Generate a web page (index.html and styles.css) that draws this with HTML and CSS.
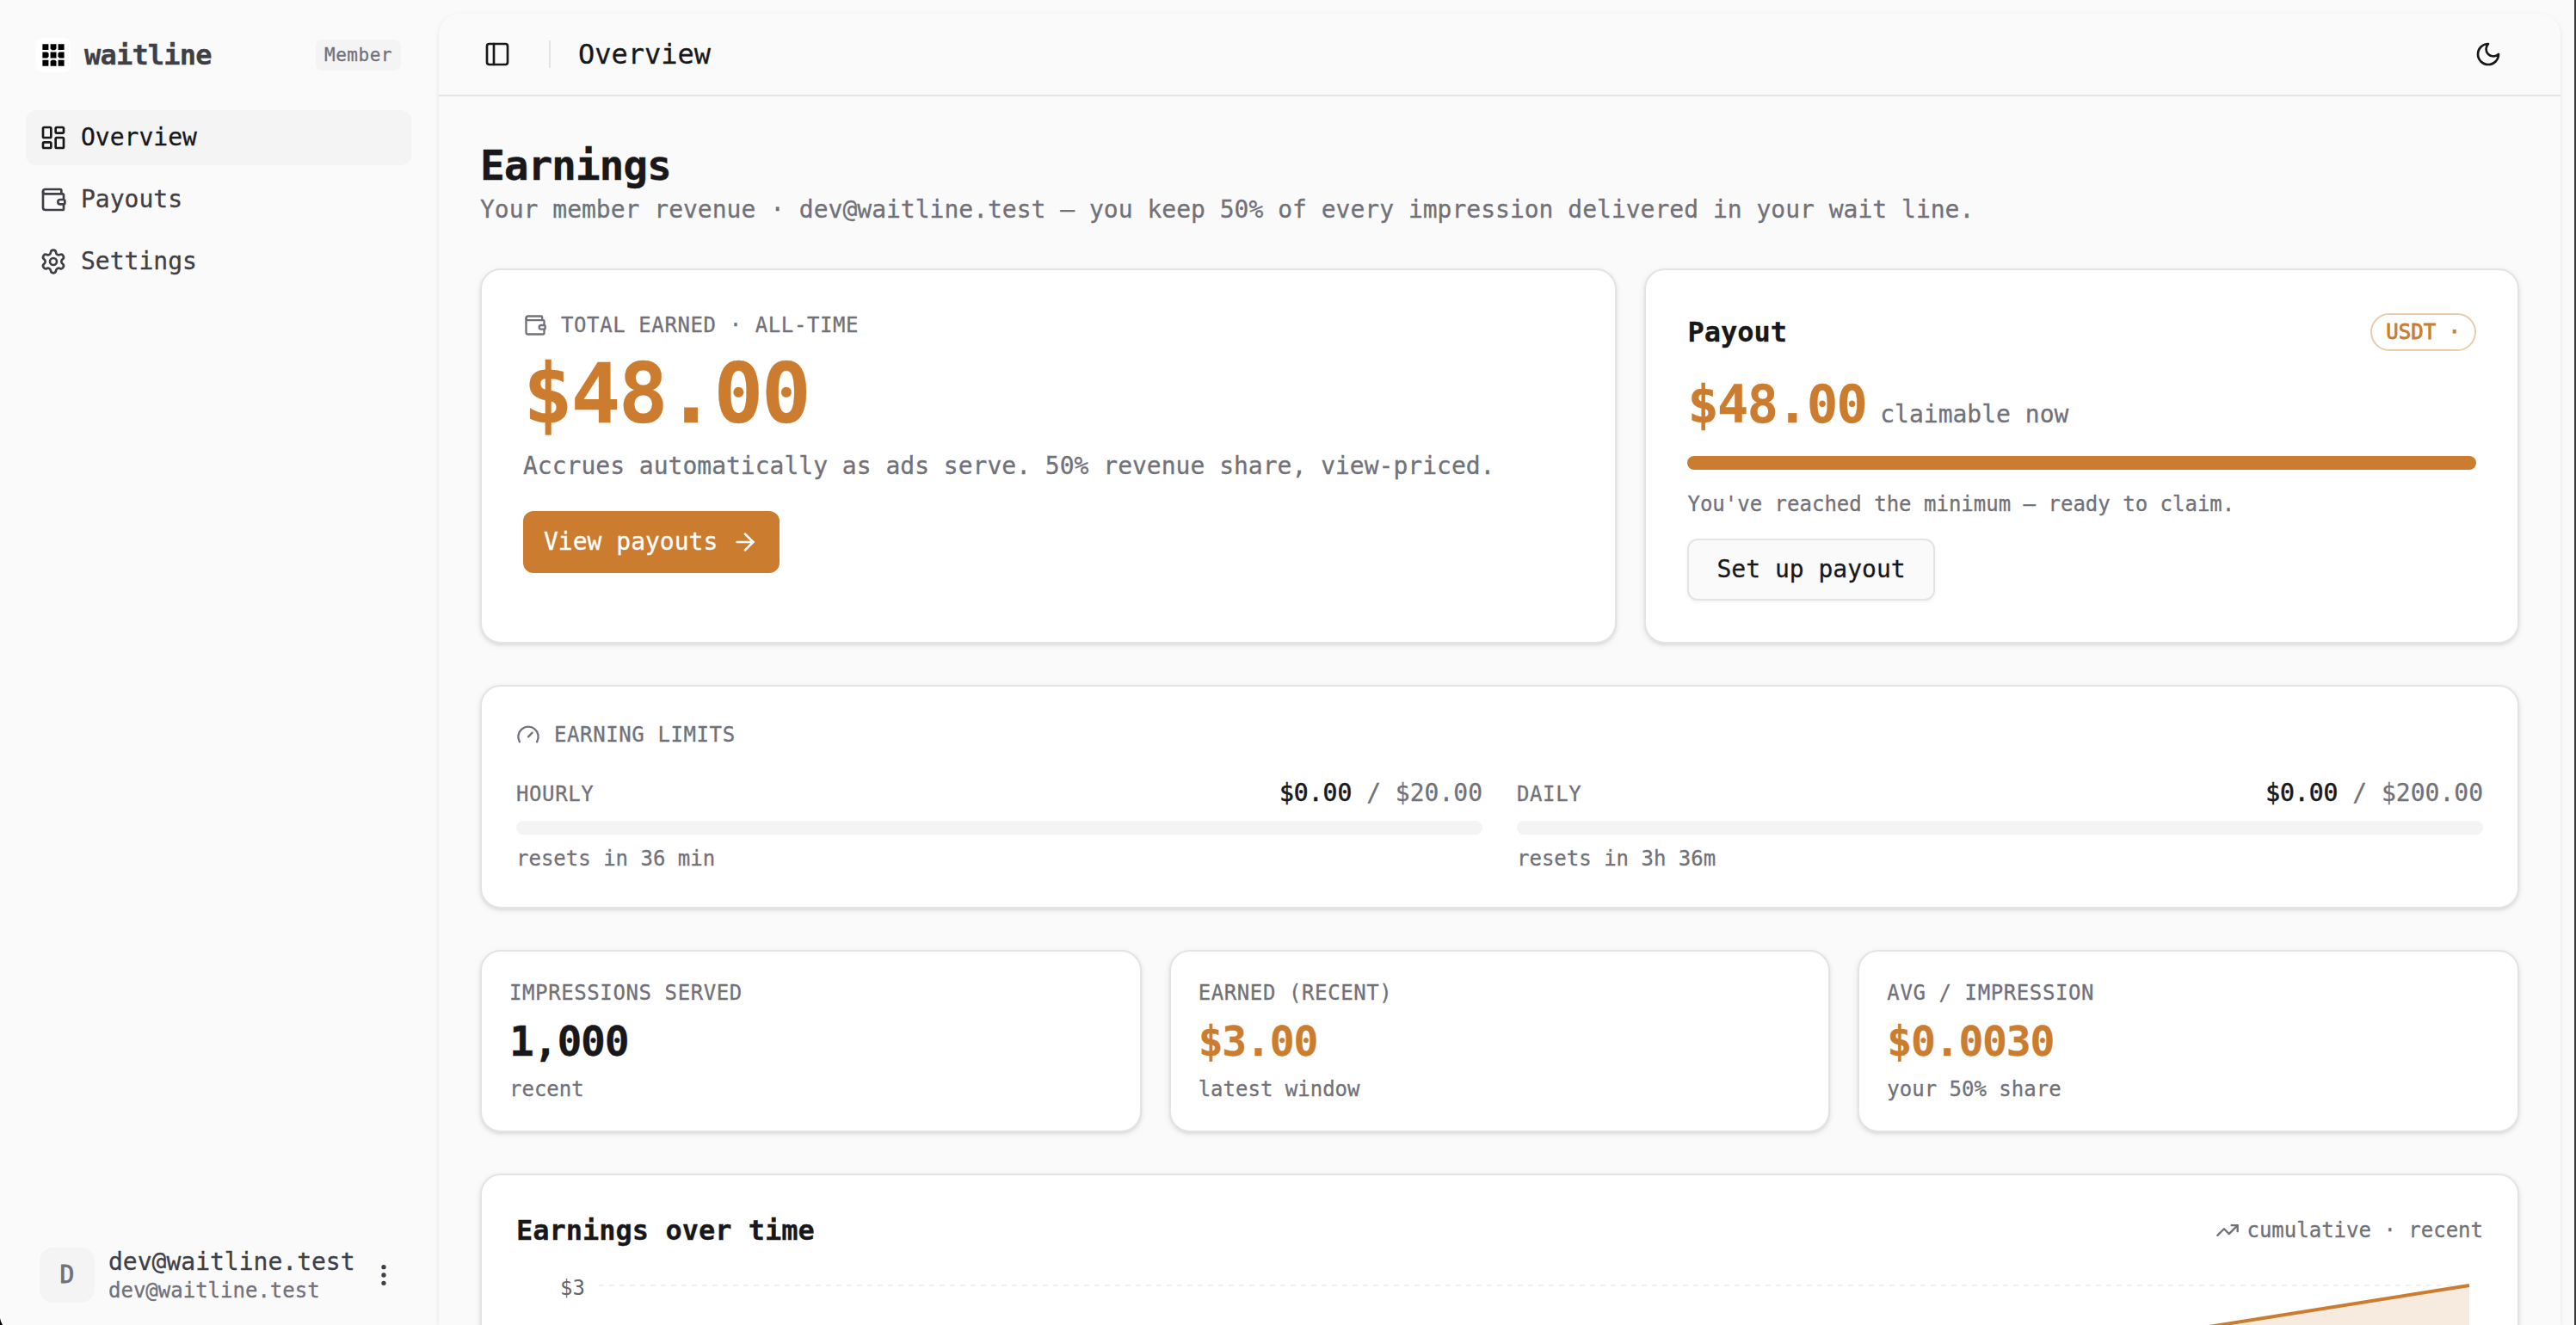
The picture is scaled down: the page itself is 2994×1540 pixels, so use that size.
FILE: index.html
```html
<!DOCTYPE html>
<html lang="en">
<head>
    <meta charset="UTF-8">
    <meta name="viewport" content="width=device-width, initial-scale=1.0">
    <title>Overview - waitline</title>
    <link rel="stylesheet" href="styles.css">
</head>
<body>
    <div class="app">
        <aside class="sidebar">
            <div class="brand">
                <svg class="logo" viewBox="0 0 40 40">
                    <path d="M7.4 7.2h7V14h-7zM25.6 7.2h7V14h-7zM16.6 16.5h6.9v6.9h-6.9zM7.4 25.8h7v6.9h-7zM25.6 25.8h7v6.9h-7z"/>
                    <path d="M16.6 7.2h6.9v5.4l-1.6 1.6h-3.7l-1.6-1.6zM7.4 16.5h5.6l1.6 1.6v3.7l-1.6 1.6H7.4zM32.6 16.5H27l-1.6 1.6v3.7l1.6 1.6h5.6zM16.6 32.7v-5.4l1.6-1.6h3.7l1.6 1.6v5.4z"/>
                </svg>
                <span class="brand-name">waitline</span>
                <span class="role">Member</span>
            </div>
            <nav class="nav">
                <a class="nav-item active">
                    <svg class="icon" viewBox="0 0 24 24"><rect width="7" height="9" x="3" y="3" rx="1"/><rect width="7" height="5" x="14" y="3" rx="1"/><rect width="7" height="9" x="14" y="12" rx="1"/><rect width="7" height="5" x="3" y="16" rx="1"/></svg>
                    <span>Overview</span>
                </a>
                <a class="nav-item">
                    <svg class="icon" viewBox="0 0 24 24"><path d="M19 7V4a1 1 0 0 0-1-1H5a2 2 0 0 0 0 4h15a1 1 0 0 1 1 1v4h-3a2 2 0 0 0 0 4h3a1 1 0 0 0 1-1v-2a1 1 0 0 0-1-1"/><path d="M3 5v14a2 2 0 0 0 2 2h15a1 1 0 0 0 1-1v-4"/></svg>
                    <span>Payouts</span>
                </a>
                <a class="nav-item">
                    <svg class="icon" viewBox="0 0 24 24"><path d="M9.671 4.136a2.34 2.34 0 0 1 4.659 0 2.34 2.34 0 0 0 3.319 1.915 2.34 2.34 0 0 1 2.33 4.033 2.34 2.34 0 0 0 0 3.831 2.34 2.34 0 0 1-2.33 4.033 2.34 2.34 0 0 0-3.319 1.915 2.34 2.34 0 0 1-4.659 0 2.34 2.34 0 0 0-3.32-1.915 2.34 2.34 0 0 1-2.33-4.033 2.34 2.34 0 0 0 0-3.831A2.34 2.34 0 0 1 6.35 6.051a2.34 2.34 0 0 0 3.319-1.915"/><circle cx="12" cy="12" r="3"/></svg>
                    <span>Settings</span>
                </a>
            </nav>
            <div class="user">
                <div class="avatar">D</div>
                <div class="user-text">
                    <span class="user-name">dev@waitline.test</span>
                    <span class="user-email">dev@waitline.test</span>
                </div>
                <svg class="icon" viewBox="0 0 24 24"><circle cx="12" cy="12" r="1"/><circle cx="12" cy="5" r="1"/><circle cx="12" cy="19" r="1"/></svg>
            </div>
        </aside>

        <main class="main">
            <header class="topbar">
                <svg class="icon" viewBox="0 0 24 24"><rect width="18" height="18" x="3" y="3" rx="2"/><path d="M9 3v18"/></svg>
                <div class="separator"></div>
                <span class="page-name">Overview</span>
                <svg class="icon theme-toggle" viewBox="0 0 24 24"><path d="M12 3a6 6 0 0 0 9 9 9 9 0 1 1-9-9Z"/></svg>
            </header>

            <div class="content">
                <div class="heading">
                    <h1>Earnings</h1>
                    <p>Your member revenue · dev@waitline.test — you keep 50% of every impression delivered in your wait line.</p>
                </div>

                <div class="hero">
                    <section class="card card-total">
                        <div class="label">
                            <svg class="icon icon-sm" viewBox="0 0 24 24"><path d="M19 7V4a1 1 0 0 0-1-1H5a2 2 0 0 0 0 4h15a1 1 0 0 1 1 1v4h-3a2 2 0 0 0 0 4h3a1 1 0 0 0 1-1v-2a1 1 0 0 0-1-1"/><path d="M3 5v14a2 2 0 0 0 2 2h15a1 1 0 0 0 1-1v-4"/></svg>
                            TOTAL EARNED · ALL-TIME
                        </div>
                        <div class="total">$48.00</div>
                        <p class="muted">Accrues automatically as ads serve. 50% revenue share, view-priced.</p>
                        <button class="btn btn-primary">
                            View payouts
                            <svg class="icon" viewBox="0 0 24 24"><path d="M5 12h14"/><path d="m12 5 7 7-7 7"/></svg>
                        </button>
                    </section>

                    <section class="card card-payout">
                        <div class="card-head">
                            <h2>Payout</h2>
                            <span class="badge">USDT ·</span>
                        </div>
                        <div class="claimable">
                            <span class="amount">$48.00</span>
                            <span class="muted">claimable now</span>
                        </div>
                        <div class="progress"><div class="progress-fill" style="width: 100%"></div></div>
                        <p class="note">You've reached the minimum — ready to claim.</p>
                        <button class="btn btn-outline">Set up payout</button>
                    </section>
                </div>

                <section class="card card-limits">
                    <div class="label">
                        <svg class="icon icon-sm" viewBox="0 0 24 24"><path d="m12 14 4-4"/><path d="M3.34 19a10 10 0 1 1 17.32 0"/></svg>
                        EARNING LIMITS
                    </div>
                    <div class="limits">
                        <div class="limit">
                            <div class="limit-row">
                                <span class="label">HOURLY</span>
                                <span class="muted"><span class="strong">$0.00</span> / $20.00</span>
                            </div>
                            <div class="progress"><div class="progress-fill" style="width: 0%"></div></div>
                            <p class="note">resets in 36 min</p>
                        </div>
                        <div class="limit">
                            <div class="limit-row">
                                <span class="label">DAILY</span>
                                <span class="muted"><span class="strong">$0.00</span> / $200.00</span>
                            </div>
                            <div class="progress"><div class="progress-fill" style="width: 0%"></div></div>
                            <p class="note">resets in 3h 36m</p>
                        </div>
                    </div>
                </section>

                <div class="stats">
                    <section class="card stat">
                        <div class="label">IMPRESSIONS SERVED</div>
                        <div class="stat-value">1,000</div>
                        <p class="note">recent</p>
                    </section>
                    <section class="card stat">
                        <div class="label">EARNED (RECENT)</div>
                        <div class="stat-value accent">$3.00</div>
                        <p class="note">latest window</p>
                    </section>
                    <section class="card stat">
                        <div class="label">AVG / IMPRESSION</div>
                        <div class="stat-value accent">$0.0030</div>
                        <p class="note">your 50% share</p>
                    </section>
                </div>

                <section class="card card-chart">
                    <div class="card-head">
                        <h2>Earnings over time</h2>
                        <span class="note chart-note">
                            <svg class="icon icon-sm" viewBox="0 0 24 24"><path d="M16 7h6v6"/><path d="m22 7-8.5 8.5-5-5L2 17"/></svg>
                            cumulative · recent
                        </span>
                    </div>
                    <svg class="chart" viewBox="0 0 2286 480">
                        <line class="chart-grid" x1="96" y1="16" x2="2270" y2="16"/>
                        <polygon class="chart-area" points="96,361 2270,16 2270,400 96,400"/>
                        <line class="chart-line" x1="96" y1="361" x2="2270" y2="16"/>
                        <text class="chart-tick" x="80" y="27" text-anchor="end">$3</text>
                    </svg>
                </section>
            </div>
        </main>
    </div>
    <div class="edge-right"></div>
    <div class="edge-corner"></div>
</body>
</html>
```

FILE: styles.css
```css
* {
  box-sizing: border-box;
}

body {
  margin: 0;
  height: 1540px;
  overflow: hidden;
  position: relative;
  background-color: #fafafa;
  color: #18181b;
  font-family: Menlo, "DejaVu Sans Mono", monospace;
  font-size: 28px;
  line-height: 40px;
  -webkit-text-stroke: 0.3px;
}

h1, h2, p {
  margin: 0;
}

.app {
  display: flex;
  height: 1540px;
  overflow: hidden;
}

.icon {
  width: 32px;
  height: 32px;
  flex-shrink: 0;
  fill: none;
  stroke: currentColor;
  stroke-width: 2;
  stroke-linecap: round;
  stroke-linejoin: round;
}

.icon-sm {
  width: 28px;
  height: 28px;
}

/* sidebar */
.sidebar {
  width: 510px;
  flex-shrink: 0;
  display: flex;
  flex-direction: column;
  padding: 44px 32px 26px 30px;
  color: #3f3f46;
}

.brand {
  display: flex;
  align-items: center;
  height: 40px;
  padding: 0 12px;
  margin-bottom: 44px;
}

.logo {
  width: 40px;
  height: 40px;
  margin-right: 16px;
  background-color: #fff;
  border-radius: 8px;
}

.brand-name {
  font-size: 32px;
  font-weight: bold;
  letter-spacing: -0.025em;
}

.role {
  margin-left: auto;
  padding: 0 10px;
  height: 36px;
  line-height: 36px;
  font-size: 21px;
  letter-spacing: 0.025em;
  color: #71717a;
  background-color: #f4f4f5;
  border-radius: 8px;
}

.nav {
  display: flex;
  flex-direction: column;
  gap: 8px;
}

.nav-item {
  display: flex;
  align-items: center;
  gap: 16px;
  height: 64px;
  padding: 0 16px;
  border-radius: 12px;
}

.nav-item.active {
  background-color: #f4f4f4;
  color: #18181b;
}

.user {
  display: flex;
  align-items: center;
  gap: 16px;
  margin-top: auto;
  padding: 0 16px;
}

.avatar {
  width: 64px;
  height: 64px;
  line-height: 64px;
  text-align: center;
  color: #71717a;
  background-color: #f4f4f4;
  border-radius: 16px;
  -webkit-text-stroke: 0.8px;
}

.user-text {
  display: flex;
  flex-direction: column;
  flex: 1;
  margin: -2px 0;
}

.user-name {
  line-height: 35px;
}

.user-email {
  font-size: 24px;
  line-height: 32px;
  color: #71717a;
}

/* main panel */
.main {
  flex: 1;
  min-width: 0;
  margin: 16px 18px 0 0;
  background-color: #fafafa;
  border-radius: 24px 24px 0 0;
  box-shadow: 0 2px 6px rgba(0, 0, 0, 0.08), 0 2px 4px -2px rgba(0, 0, 0, 0.08);
}

.topbar {
  display: flex;
  align-items: center;
  height: 96px;
  padding: 0 68px 0 52px;
  border-bottom: 2px solid #e4e4e4;
}

.separator {
  width: 2px;
  height: 32px;
  margin: 0 32px 0 44px;
  background-color: #e4e4e4;
}

.page-name {
  font-size: 32px;
}

.theme-toggle {
  margin-left: auto;
}

.content {
  display: flex;
  flex-direction: column;
  gap: 48px;
  padding: 48px;
}

.heading {
  height: 104px;
}

h1 {
  font-size: 48px;
  line-height: 64px;
  letter-spacing: -0.025em;
}

.heading p {
  color: #71717a;
}

h2 {
  font-size: 32px;
  line-height: 48px;
}

.card {
  background-color: #fff;
  border: 2px solid #e4e4e4;
  border-radius: 24px;
  box-shadow: 0 2px 6px rgba(0, 0, 0, 0.1), 0 2px 4px -2px rgba(0, 0, 0, 0.1);
}

.label {
  display: flex;
  align-items: center;
  gap: 16px;
  font-size: 24px;
  line-height: 32px;
  letter-spacing: 0.025em;
  color: #71717a;
}

.muted {
  color: #71717a;
}

.note {
  font-size: 24px;
  line-height: 32px;
  color: #71717a;
}

.strong {
  color: #18181b;
  -webkit-text-stroke: 0.6px;
}

.accent {
  color: #cb7c2e;
}

.hero {
  display: grid;
  grid-template-columns: 1.3fr 1fr;
  gap: 32px;
}

.card-total {
  padding: 48px;
}

.total {
  margin: 16px 0;
  font-size: 96px;
  font-weight: bold;
  line-height: 96px;
  letter-spacing: -0.025em;
  color: #cb7c2e;
}

.btn {
  display: inline-flex;
  align-items: center;
  gap: 16px;
  height: 72px;
  font: inherit;
  border-radius: 12px;
}

.btn-primary {
  margin-top: 32px;
  padding: 0 24px;
  color: #fff;
  background-color: #cb7c2e;
  border: none;
}

.btn-outline {
  align-self: flex-start;
  padding: 0 32px;
  color: #18181b;
  background-color: #fafafa;
  border: 2px solid #e4e4e4;
  box-shadow: 0 2px 4px rgba(0, 0, 0, 0.05);
}

.card-payout {
  display: flex;
  flex-direction: column;
  gap: 24px;
  padding: 48px;
}

.card-head {
  display: flex;
  align-items: center;
  justify-content: space-between;
}

.badge {
  height: 44px;
  padding: 0 16px;
  font-size: 24px;
  line-height: 40px;
  color: #cb7c2e;
  border: 2px solid #eacbab;
  border-radius: 22px;
  -webkit-text-stroke: 0.8px;
}

.claimable {
  display: flex;
  align-items: baseline;
  gap: 16px;
}

.amount {
  font-size: 60px;
  font-weight: bold;
  line-height: 72px;
  letter-spacing: -0.025em;
  color: #cb7c2e;
}

.progress {
  height: 16px;
  overflow: hidden;
  background-color: #f4f4f4;
  border-radius: 8px;
}

.progress-fill {
  height: 100%;
  background-color: #cb7c2e;
}

.card-limits {
  padding: 40px;
}

.limits {
  display: grid;
  grid-template-columns: 1fr 1fr;
  gap: 40px;
  margin-top: 32px;
}

.limit {
  display: flex;
  flex-direction: column;
  gap: 12px;
}

.limit-row {
  display: flex;
  align-items: baseline;
  justify-content: space-between;
  height: 40px;
}

.stats {
  display: grid;
  grid-template-columns: repeat(3, 1fr);
  gap: 32px;
}

.stat {
  display: flex;
  flex-direction: column;
  gap: 8px;
  padding: 32px;
}

.stat-value {
  font-size: 48px;
  font-weight: bold;
  line-height: 64px;
  letter-spacing: -0.025em;
}

.card-chart {
  padding: 40px;
}

.chart-note {
  display: flex;
  align-items: center;
  gap: 8px;
}

.chart {
  display: block;
  width: 100%;
  margin-top: 24px;
}

.chart-grid {
  stroke: #f1f1f1;
  stroke-width: 2;
  stroke-dasharray: 6 6;
}

.chart-area {
  fill: #f7ebdf;
}

.chart-line {
  stroke: #cb7c2e;
  stroke-width: 4;
}

.chart-tick {
  font-size: 24px;
  fill: #666;
}

/* window edges */
.edge-right {
  position: absolute;
  top: 0;
  right: 0;
  width: 2px;
  height: 100%;
  background-color: #3a3a3a;
}

.edge-corner {
  position: absolute;
  left: 0;
  bottom: 0;
  width: 3px;
  height: 8px;
  background-color: #000;
  clip-path: polygon(0 0, 35% 50%, 100% 100%, 0 100%);
}
```
